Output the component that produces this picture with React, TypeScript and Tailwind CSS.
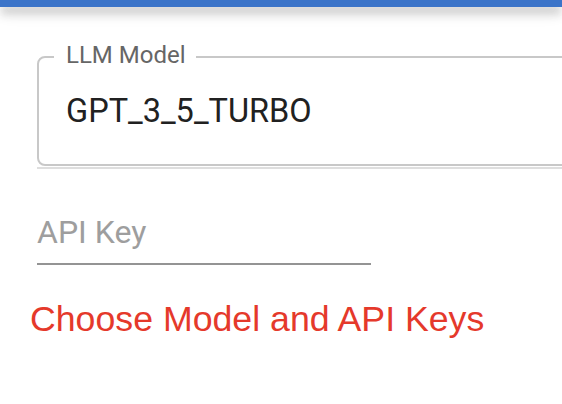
export default function App() {
  return (
    <div className="h-screen w-full overflow-hidden bg-white font-['Roboto',sans-serif]">
      {/* bottom edge of the app bar */}
      <div className="relative z-10 h-[7px] w-full bg-[#3b74c9] shadow-[0_4px_8px_-2px_rgba(0,0,0,0.2),0_8px_10px_0_rgba(0,0,0,0.14),0_2px_20px_0_rgba(0,0,0,0.12)]" />

      <div className="pl-[37px]">
        {/* outlined select */}
        <div className="relative mt-[49px] h-[110px] w-[600px] rounded-lg border-2 border-[#c8c8c8] pl-[27px] pt-[33px]">
          <span className="absolute left-[15px] top-[-15.5px] bg-white pl-[12px] pr-[10px] text-[24px] leading-[24px] text-[#666666]">
            LLM Model
          </span>
          <div className="text-[32.5px] leading-[40px] text-[#212121]">GPT_3_5_TURBO</div>
        </div>
        <div className="mt-[1px] h-[2px] w-[600px] bg-[#dedede]" />

        {/* standard text field */}
        <div className="mt-[43px] w-[334px]">
          <input
            placeholder="API Key"
            className="block h-[40px] w-full bg-transparent text-[32px] leading-[40px] text-[#212121] outline-none placeholder:text-[#9e9e9e]"
          />
          <div className="mt-[11px] h-[2px] w-full bg-[#949494]" />
        </div>

        <p className="-ml-[7px] mt-[34px] font-['Liberation_Sans',Arial,sans-serif] text-[35.7px] leading-[40px] text-[#e5392b]">
          Choose Model and API Keys
        </p>
      </div>
    </div>
  );
}
